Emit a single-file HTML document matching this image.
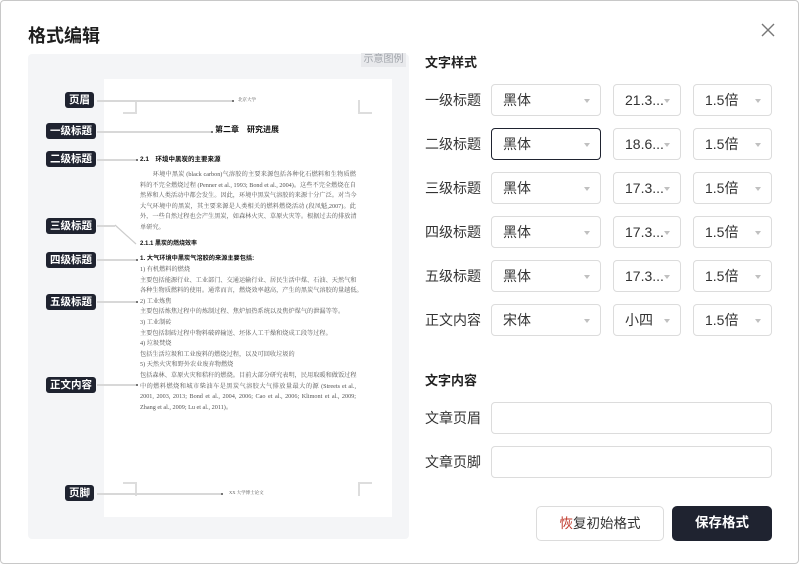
<!DOCTYPE html>
<html><head><meta charset="utf-8"><style>
*{margin:0;padding:0;box-sizing:border-box}
body{width:799px;height:564px;background:#fff;font-family:"Liberation Sans","Noto Sans CJK SC",sans-serif;position:relative;overflow:hidden;color:#222}
.frame{position:absolute;left:0;top:0;width:799px;height:564px;border:1px solid #c8c8c8;border-radius:4px}
.title{position:absolute;left:28px;top:22px;font-size:18px;font-weight:bold;color:#1f1f1f}
.close{position:absolute;left:760px;top:22px}
.prev{position:absolute;left:28px;top:54px;width:381px;height:485px;background:#f4f5f7;border-radius:4px}
.tag{position:absolute;left:361px;top:53px;width:45px;height:14px;background:#e8e9ec;color:#a0a4aa;font-size:10px;line-height:14px;text-align:center}
.page{position:absolute;left:104px;top:79px;width:288px;height:438px;background:#fff}
.lb{position:absolute;background:#1f2330;color:#fff;font-size:10.5px;line-height:16px;height:16px;padding:0 4px;border-radius:3px;font-weight:bold}
.ln{position:absolute;height:1.5px;background:#d8d8d8}
.dot{position:absolute;width:2px;height:2px;background:#777}
.pt{position:absolute;font-size:6.2px;color:#555;white-space:nowrap;line-height:10.6px;font-family:"Liberation Serif","Noto Serif CJK SC",serif}
.j{width:216px;text-align:justify;text-align-last:justify}
.h{color:#111;font-weight:bold;font-family:"Liberation Sans","Noto Sans CJK SC",sans-serif}
.cor{position:absolute;width:14px;height:14px;border-color:#ddd;border-style:solid;border-width:0}
.sec{position:absolute;left:425px;font-size:13px;font-weight:bold;color:#222}
.rl{position:absolute;left:425px;font-size:14px;color:#333}
.sel{position:absolute;height:32px;border:1px solid #dcdcdc;border-radius:4px;font-size:14px;color:#333;line-height:30px;padding-left:11px}
.sel:after{content:"";position:absolute;right:10px;top:14px;border:3.5px solid transparent;border-top:4px solid #c0c0c0}
.inp{position:absolute;left:491px;width:281px;height:32px;border:1px solid #dcdcdc;border-radius:4px}
.btn{position:absolute;top:506px;height:35px;border-radius:5px;font-size:13.5px;line-height:33px;text-align:center}
</style></head><body>
<div class="frame"></div>
<div class="title">格式编辑</div>
<svg class="close" width="16" height="16" viewBox="0 0 16 16"><path d="M2 2L14 14M14 2L2 14" stroke="#777" stroke-width="1.4"/></svg>
<div class="prev"></div>
<div class="tag">示意图例</div>
<div class="page"></div>
<div class="cor" style="left:123px;top:100px;border-right-width:2px;border-bottom-width:2px"></div>
<div class="cor" style="left:358px;top:100px;border-left-width:2px;border-bottom-width:2px"></div>
<div class="cor" style="left:123px;top:482px;border-right-width:2px;border-top-width:2px"></div>
<div class="cor" style="left:358px;top:482px;border-left-width:2px;border-top-width:2px"></div>

<div class="lb" style="left:65px;top:92px">页眉</div>
<div class="lb" style="left:46px;top:123px">一级标题</div>
<div class="lb" style="left:46px;top:151px">二级标题</div>
<div class="lb" style="left:46px;top:218px">三级标题</div>
<div class="lb" style="left:46px;top:252px">四级标题</div>
<div class="lb" style="left:46px;top:294px">五级标题</div>
<div class="lb" style="left:46px;top:377px">正文内容</div>
<div class="lb" style="left:65px;top:485px">页脚</div>

<div class="ln" style="left:97px;top:100px;width:135px"></div><div class="dot" style="left:232px;top:100px"></div>
<div class="ln" style="left:97px;top:131px;width:115px"></div><div class="dot" style="left:211px;top:131px"></div>
<div class="ln" style="left:97px;top:159px;width:40px"></div><div class="dot" style="left:136px;top:159px"></div>
<div class="ln" style="left:97px;top:225px;width:18px"></div>
<svg style="position:absolute;left:114px;top:224px" width="25" height="22"><path d="M1 1L22 20" stroke="#ccc" stroke-width="1.2"/></svg>
<div class="ln" style="left:97px;top:259px;width:40px"></div><div class="dot" style="left:136px;top:259px"></div>
<div class="ln" style="left:97px;top:301px;width:40px"></div><div class="dot" style="left:136px;top:301px"></div>
<div class="ln" style="left:97px;top:384px;width:40px"></div><div class="dot" style="left:136px;top:384px"></div>
<div class="ln" style="left:97px;top:493px;width:125px"></div><div class="dot" style="left:221px;top:493px"></div>

<div class="pt" style="left:238px;top:95px;font-size:4.5px">北京大学</div>
<div class="pt h" style="left:215px;top:125px;font-size:8px">第二章　研究进展</div>
<div class="pt h" style="left:140px;top:155px;font-size:6.5px">2.1　环境中黑炭的主要来源</div>
<div class="pt" style="left:140px;top:170px">
<div class="j">　　环境中黑炭 (black carbon)气溶胶的主要来源包括各种化石燃料和生物质燃</div>
<div class="j">料的不完全燃烧过程 (Penner et al., 1993; Bond et al., 2004)。这些不完全燃烧在自</div>
<div class="j">然界和人类活动中都会发生。因此，环境中黑炭气溶胶的来源十分广泛。对当今</div>
<div class="j">大气环境中的黑炭，其主要来源是人类相关的燃料燃烧活动 (段凤魁,2007)。此</div>
<div class="j">外，一些自然过程也会产生黑炭，如森林火灾、草原火灾等。根据过去的排放清</div>
<div>单研究。</div>
</div>
<div class="pt h" style="left:140px;top:239px;font-size:6px">2.1.1 黑炭的燃烧效率</div>
<div class="pt h" style="left:140px;top:254px">1. 大气环境中黑炭气溶胶的来源主要包括:</div>
<div class="pt" style="left:140px;top:265px">
<div>1) 有机燃料的燃烧</div>
<div class="j">主要包括能源行业、工业部门、交通运输行业、居民生活中煤、石油、天然气和</div>
<div>各种生物质燃料的使用。通常而言，燃烧效率越高，产生的黑炭气溶胶的量越低。</div>
<div>2) 工业炼焦</div>
<div>主要包括炼焦过程中的炼制过程、焦炉加热系统以及焦炉煤气的泄漏等等。</div>
<div>3) 工业制砖</div>
<div>主要包括制砖过程中物料破碎输送、坯体人工干燥和烧成工段等过程。</div>
<div>4) 垃圾焚烧</div>
<div>包括生活垃圾和工业废料的燃烧过程，以及可回收垃圾的</div>
<div>5) 天然火灾和野外农业废弃物燃烧</div>
<div class="j">包括森林、草原火灾和秸秆的燃烧。目前大部分研究表明，民用取暖和做饭过程</div>
<div class="j">中的燃料燃烧和城市柴油车是黑炭气溶胶大气排放量最大的源 (Streets et al.,</div>
<div class="j">2001, 2003, 2013; Bond et al., 2004, 2006; Cao et al., 2006; Klimont et al., 2009;</div>
<div>Zhang et al., 2009; Lu et al., 2011)。</div>
</div>
<div class="pt" style="left:229px;top:488px;font-size:4.5px">XX 大学博士论文</div>

<div class="sec" style="top:52px">文字样式</div>
<div class="rl" style="top:90px">一级标题</div>
<div class="rl" style="top:134px">二级标题</div>
<div class="rl" style="top:178px">三级标题</div>
<div class="rl" style="top:222px">四级标题</div>
<div class="rl" style="top:266px">五级标题</div>
<div class="rl" style="top:310px">正文内容</div>

<div class="sel" style="left:491px;top:84px;width:110px">黑体</div>
<div class="sel" style="left:613px;top:84px;width:68px">21.3...</div>
<div class="sel" style="left:693px;top:84px;width:79px">1.5倍</div>
<div class="sel" style="left:491px;top:128px;width:110px;border-color:#1f2330">黑体</div>
<div class="sel" style="left:613px;top:128px;width:68px">18.6...</div>
<div class="sel" style="left:693px;top:128px;width:79px">1.5倍</div>
<div class="sel" style="left:491px;top:172px;width:110px">黑体</div>
<div class="sel" style="left:613px;top:172px;width:68px">17.3...</div>
<div class="sel" style="left:693px;top:172px;width:79px">1.5倍</div>
<div class="sel" style="left:491px;top:216px;width:110px">黑体</div>
<div class="sel" style="left:613px;top:216px;width:68px">17.3...</div>
<div class="sel" style="left:693px;top:216px;width:79px">1.5倍</div>
<div class="sel" style="left:491px;top:260px;width:110px">黑体</div>
<div class="sel" style="left:613px;top:260px;width:68px">17.3...</div>
<div class="sel" style="left:693px;top:260px;width:79px">1.5倍</div>
<div class="sel" style="left:491px;top:304px;width:110px">宋体</div>
<div class="sel" style="left:613px;top:304px;width:68px">小四</div>
<div class="sel" style="left:693px;top:304px;width:79px">1.5倍</div>

<div class="sec" style="top:370px">文字内容</div>
<div class="rl" style="top:408px">文章页眉</div>
<div class="rl" style="top:452px">文章页脚</div>
<div class="inp" style="top:402px"></div>
<div class="inp" style="top:446px"></div>

<div class="btn" style="left:536px;width:128px;border:1px solid #dcdcdc;color:#333"><span style="color:#c0392b">恢</span>复初始格式</div>
<div class="btn" style="left:672px;width:100px;background:#1f2330;color:#fff;font-weight:bold">保存格式</div>
</body></html>
